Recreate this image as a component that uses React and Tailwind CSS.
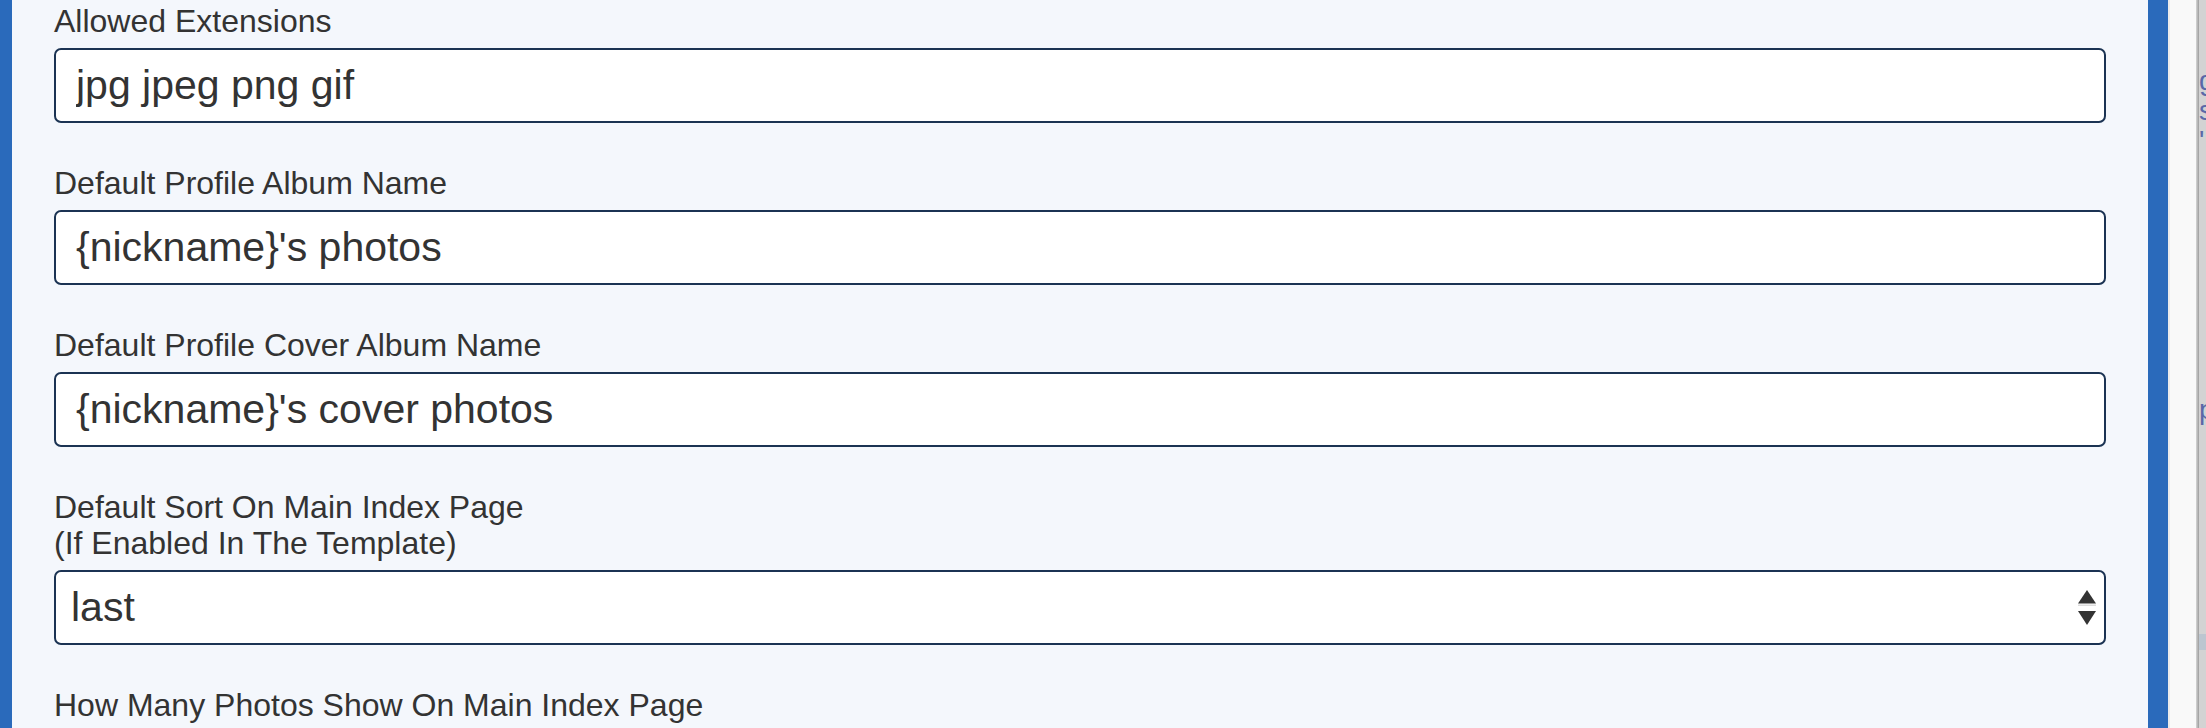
import React from 'react'

const fields = [
  { label: ['Allowed Extensions'], value: 'jpg jpeg png gif' },
  { label: ['Default Profile Album Name'], value: "{nickname}'s photos" },
  { label: ['Default Profile Cover Album Name'], value: "{nickname}'s cover photos" },
  { label: ['Default Sort On Main Index Page', '(If Enabled In The Template)'], value: 'last', select: true },
  { label: ['How Many Photos Show On Main Index Page'], value: '20' },
]

const SortArrows = () => (
  <svg width="18" height="35" viewBox="0 0 18 35" className="shrink-0">
    <polygon points="9,0 18,13.5 0,13.5" fill="#333" />
    <rect x="0" y="14.5" width="18" height="1.5" fill="#dcdcdc" />
    <polygon points="0,21 18,21 9,35" fill="#333" />
  </svg>
)

const Field = ({ label, value, select }) => {
  return (
    <div className="mb-[42px]">
      <label className="block text-[32px] leading-[36px]">
        {label.map((line, i) => (
          <span key={i} className="block">{line}</span>
        ))}
      </label>
      {select ? (
        <div className="mt-[9px] flex h-[75px] w-full items-center justify-between rounded-[7px] border-2 border-[#1b3353] bg-white pl-[15px] pr-[8px] text-[41px]">
          <span>{value}</span>
          <SortArrows />
        </div>
      ) : (
        <input
          readOnly
          value={value}
          className="mt-[9px] block h-[75px] w-full rounded-[7px] border-2 border-[#1b3353] bg-white px-[20px] text-[41px] text-[#333] outline-none"
        />
      )}
    </div>
  )
}

export default function App() {
  return (
    <div className="flex h-screen overflow-hidden bg-[#f9f9f9] font-['Liberation_Sans',Arial,sans-serif] text-[#333]">
      {/* settings panel */}
      <div className="min-w-0 flex-1 border-l-[12px] border-r-[20px] border-[#2a6abb] bg-[#f4f7fc] px-[42px] pt-[3px]">
        {fields.map((f, i) => (
          <Field key={i} {...f} />
        ))}
      </div>

      {/* right gutter */}
      <div className="w-[2px] shrink-0 bg-[#ebebeb]" />
      <div className="w-[26px] shrink-0 bg-[#f9f9f9]" />
      <div className="w-[3px] shrink-0 bg-gradient-to-r from-[#d6d6d6] to-[#9c9c9c]" />
      <div className="w-[7px] shrink-0 overflow-hidden whitespace-nowrap bg-[#d3d3d3] text-[28px] leading-[30px] text-[#5a68a8]">
        <div className="mt-[66px]">g</div>
        <div>s</div>
        <div>'</div>
        <div className="mt-[239px]">p</div>
        <div className="mt-[209px] h-[16px] bg-[#bcc6d0]" />
      </div>
    </div>
  )
}
